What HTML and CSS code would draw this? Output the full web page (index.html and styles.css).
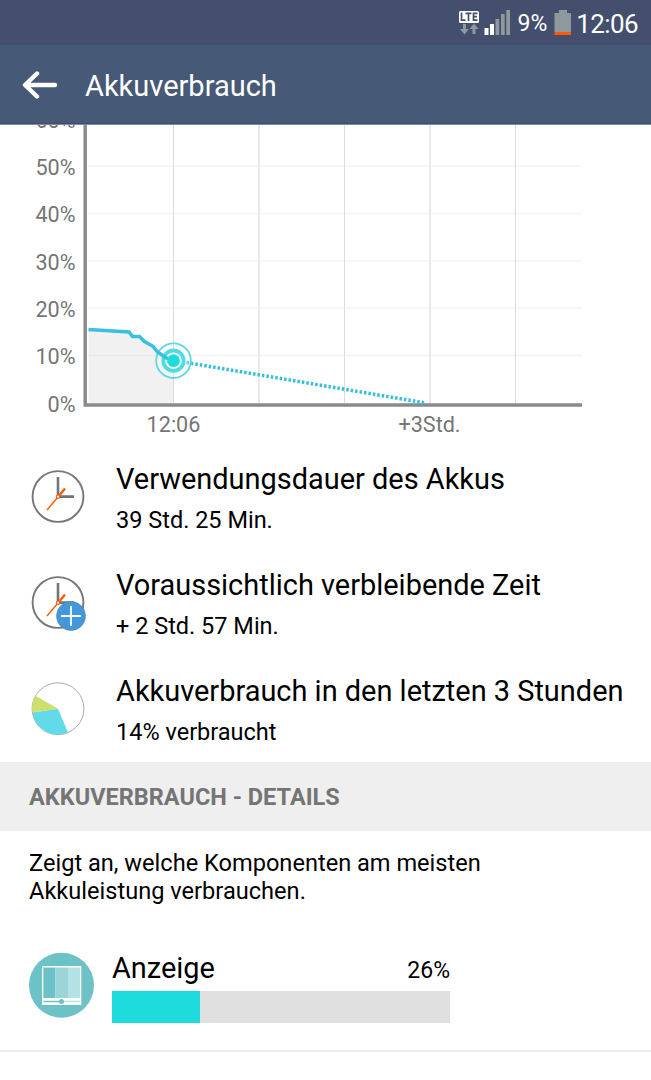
FILE: index.html
```html
<!DOCTYPE html>
<html lang="de">
<head>
<meta charset="utf-8">
<title>Akkuverbrauch</title>
<link rel="stylesheet" href="styles.css">
</head>
<body>
<div class="statusbar">
  <svg class="lte" width="22" height="28" viewBox="458 9 22 28">
    <rect x="459" y="11" width="20" height="12" rx="1.5" fill="#fff"/>
    <path d="M461.500 12.500v7.700h4M465.500 13.300h6M468.500 13.300v7.700M477.500 13.300h-4v6.900h4M473.500 16.700h3.500" fill="none" stroke="#434f6c" stroke-width="1.700"/>
    <path d="M463 24h3v5h3l-4.500 5.500l-4.500-5.500h3zM472.500 34v-5h-3l4.500-5.500l4.500 5.500h-3v5z" fill="#8e999d"/>
  </svg>
  <svg class="signal" width="26" height="28" viewBox="484 9 26 28">
    <path d="M484.500 28h4v7h-4zM490 24h4v11h-4z" fill="#fff"/>
    <path d="M495.500 19h3.700v16h-3.700zM501 14h3.700v21h-3.700zM506.300 10h3.700v25h-3.700z" fill="#8e999d"/>
  </svg>
  <span class="percent">9%</span>
  <svg class="battery" width="18" height="28" viewBox="555 9 18 28">
    <path d="M560 10h8v3h4v19h-16.500v-19h4.500z" fill="#8e999d"/>
    <path d="M555.500 32h16.500v3h-16.500z" fill="#ff5a00"/>
  </svg>
  <span class="clock">12:06</span>
</div>
<div class="titlebar">
  <svg width="36" height="30" viewBox="22 70 36 30">
    <path d="M55 85H26M37 73.500L25 85l12 11.500" fill="none" stroke="#fff" stroke-width="4.400" stroke-linecap="round" stroke-linejoin="round"/>
  </svg>
  <h1>Akkuverbrauch</h1>
</div>

<svg class="chart" width="651" height="320" viewBox="0 124 651 320">
  <!-- grid -->
  <path d="M88 166H582M88 213.500H582M88 261H582M88 308H582M88 355.500H582" stroke="#f3f3f3" stroke-width="1.300"/>
  <path d="M88.500 329.500L129 332l3 4.500h7l5 5l9 5l4 6l8 6l8.500 3V403H88.500z" fill="#f1f1f1"/>
  <path d="M88 355.500H173" stroke="#e9e9e9"/>
  <path d="M173.500 124V403M344.500 124V403M515.500 124V403" stroke="#dcdcdc"/>
  <path d="M259 124V403M430 124V403" stroke="#e8e8e8" stroke-width="2"/>
  <!-- axes -->
  <path d="M85.200 124V405H582" fill="none" stroke="#8b8a90" stroke-width="3.500"/>
  <!-- usage and forecast -->
  <path d="M186.500 362.500L426 403" stroke="#35c0de" stroke-width="3.500" stroke-dasharray="2.500 2"/>
  <circle cx="173.500" cy="360.700" r="17.300" fill="#fff" fill-opacity=".25" stroke="#5ed9e4" stroke-width="1.800"/>
  <circle cx="173.500" cy="360.700" r="10.200" fill="#fff" stroke="#4edbe4" stroke-width="3.800"/>
  <path d="M88.500 329.400L129 332l3.500 4.500h7l5 5l8.500 4.800l4 5.200l7 5l6 3.500" fill="none" stroke="#38c0de" stroke-width="3.500"/>
  <circle cx="173.500" cy="360.700" r="6.400" fill="#1fdcdc"/>
  <g class="ylabels">
    <text x="75.500" y="128">60%</text>
    <text x="75.500" y="174.500">50%</text>
    <text x="75.500" y="222">40%</text>
    <text x="75.500" y="269.500">30%</text>
    <text x="75.500" y="316.500">20%</text>
    <text x="75.500" y="364">10%</text>
    <text x="75.500" y="412">0%</text>
  </g>
  <g class="xlabels">
    <text x="173.500" y="432">12:06</text>
    <text x="429.500" y="432">+3Std.</text>
  </g>
  <!-- edge of the title bar -->
  <path d="M0 124.500H651" stroke="#8189a9"/>
</svg>

<div class="rows">
  <div class="row">
    <svg width="60" height="60" viewBox="28 467 60 60">
      <circle cx="58" cy="496.500" r="25.400" fill="#fff" stroke="#757779" stroke-width="1.900"/>
      <path d="M58 477V496.600H74" fill="none" stroke="#70757a" stroke-width="2.600"/>
      <path d="M47 510L58 497" stroke="#ff5a00" stroke-width="1.400"/>
      <path d="M58 497L65 488.500" stroke="#ff5a00" stroke-width="2.400"/>
      <circle cx="58" cy="496.700" r="1.700" fill="#fff" stroke="#ff5a00" stroke-width="1.100"/>
    </svg>
    <div>
      <h2>Verwendungsdauer des Akkus</h2>
      <p>39 Std. 25 Min.</p>
    </div>
  </div>
  <div class="row">
    <svg width="60" height="60" viewBox="28 467 60 60">
      <circle cx="58" cy="496.500" r="25.400" fill="#fff" stroke="#757779" stroke-width="1.900"/>
      <path d="M58 477V496.600H74" fill="none" stroke="#70757a" stroke-width="2.600"/>
      <path d="M47 510L58 497" stroke="#ff5a00" stroke-width="1.400"/>
      <path d="M58 497L65 488.500" stroke="#ff5a00" stroke-width="2.400"/>
      <circle cx="58" cy="496.700" r="1.700" fill="#fff" stroke="#ff5a00" stroke-width="1.100"/>
      <circle cx="71" cy="510" r="14.500" fill="#4398db" stroke="#5c7d99" stroke-width=".6"/>
      <path d="M61 510H81M71 500V520" stroke="#fff" stroke-width="1.800"/>
    </svg>
    <div>
      <h2>Voraussichtlich verbleibende Zeit</h2>
      <p>+ 2 Std. 57 Min.</p>
    </div>
  </div>
  <div class="row">
    <svg width="60" height="60" viewBox="28 679 60 60">
      <circle cx="58" cy="708.700" r="25.900" fill="#fff" stroke="#aaa" stroke-width="1"/>
      <path d="M58 708.700L68 732.500A25.900 25.900 0 0 1 32.300 712.500z" fill="#62dae8"/>
      <path d="M58 708.700L32.300 712.500A25.900 25.900 0 0 1 35.500 695.700z" fill="#cddf6c"/>
    </svg>
    <div>
      <h2>Akkuverbrauch in den letzten 3 Stunden</h2>
      <p>14% verbraucht</p>
    </div>
  </div>
</div>

<div class="section">AKKUVERBRAUCH - DETAILS</div>
<p class="info">Zeigt an, welche Komponenten am meisten<br>Akkuleistung verbrauchen.</p>

<div class="item">
  <svg width="66" height="66" viewBox="28 952 66 66">
    <circle cx="61.500" cy="985.300" r="32.500" fill="#6dc2c8"/>
    <path d="M42 966H81.300V1005H42z" fill="#fff"/>
    <path d="M43.300 967.500H55.500V998H43.300z" fill="#6dc2c8"/>
    <path d="M55.500 967.500H68V998H55.500z" fill="#9bd5da"/>
    <path d="M68 967.500H80V998H68z" fill="#b4e1e4"/>
    <path d="M43.500 1001.500H61.500" stroke="#6dc2c8" stroke-width="1.500"/>
    <path d="M61.500 1001.500H80" stroke="#b4e1e4" stroke-width="1.500"/>
    <circle cx="61.500" cy="1001.500" r="2.500" fill="#6dc2c8"/>
  </svg>
  <div class="usage">
    <div class="label"><span class="name">Anzeige</span><span>26%</span></div>
    <div class="bar"><div class="fill" style="width:26%"></div></div>
  </div>
</div>
</body>
</html>
```

FILE: styles.css
```css
body{
	margin:0;
	width:651px;
	height:1080px;
	overflow:hidden;
	background:#fff;
	color:#000;
	font-family:Roboto,"Liberation Sans",sans-serif;
}
h1,h2,p{
	margin:0;
	font-weight:400;
}
svg{
	display:block;
	flex:none;
}
.statusbar{
	display:flex;
	height:45px;
	box-sizing:border-box;
	padding:9px 13px 0 0;
	justify-content:flex-end;
	background:#434f6c;
	color:#fff;
	white-space:nowrap;
}
.lte{
	margin-right:4px;
}
.signal{
	margin-right:7px;
}
.percent{
	margin-right:7px;
	font-size:23px;
	line-height:30px;
}
.battery{
	margin-right:4px;
}
.clock{
	font-size:26px;
	line-height:30px;
	letter-spacing:-.6px;
}
.titlebar{
	display:flex;
	align-items:center;
	height:79px;
	box-sizing:border-box;
	padding-left:22px;
	background:#465977;
	border-bottom:1px solid #3e4c6b;
	color:#fff;
}
.titlebar svg{
	margin-top:2px;
}
.titlebar h1{
	margin:4px 0 0 27px;
	font-size:29px;
	line-height:36px;
}
.chart text{
	font-size:21.6px;
	fill:#757575;
}
.ylabels{
	text-anchor:end;
}
.xlabels{
	text-anchor:middle;
}
.row{
	display:flex;
	height:106px;
	box-sizing:border-box;
	padding:23px 0 0 28px;
}
.row > div{
	margin:-6px 0 0 28px;
	white-space:nowrap;
}
.row h2{
	font-size:28.95px;
	line-height:36px;
}
.row p{
	margin-top:7px;
	font-size:23.5px;
	line-height:32px;
}
.section{
	height:69px;
	padding-left:29px;
	background:#efefef;
	color:#757575;
	font-size:23.5px;
	font-weight:700;
	line-height:70px;
}
.info{
	height:121px;
	box-sizing:border-box;
	padding:18px 0 0 29px;
	font-size:23.6px;
	line-height:28px;
}
.item{
	display:flex;
	height:100px;
	box-sizing:border-box;
	padding-left:28px;
	border-bottom:2px solid #ececec;
}
.usage{
	width:338px;
	margin-left:18px;
}
.label{
	display:flex;
	height:39px;
	justify-content:space-between;
	align-items:baseline;
	font-size:23px;
}
.name{
	font-size:28.9px;
	line-height:32px;
}
.bar{
	height:32px;
	background:#e0e0e0;
}
.fill{
	height:32px;
	background:#1fdcdc;
}
```
